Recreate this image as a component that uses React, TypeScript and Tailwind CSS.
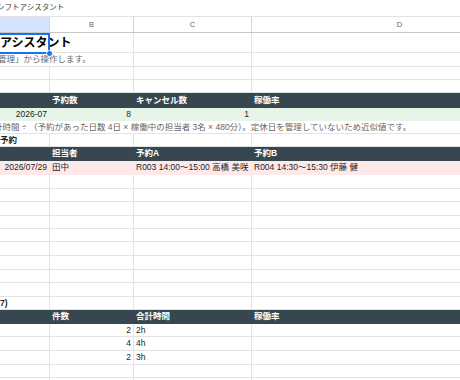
import type { ReactNode } from 'react'

const W = ['w-[50px]', 'w-[84px]', 'w-[118px]', 'w-[296px]']

type TCell = {
    text?: ReactNode
    align?: 'left' | 'right'
    bold?: boolean
    cls?: string
    hideLine?: boolean
}

type TRow = {
    h: string
    tone?: 'plain' | 'dark' | 'green' | 'pink'
    cells: TCell[]
}

const toneCls = {
    plain: 'bg-white border-[#e2e3e3] text-[#1f1f1f]',
    dark: 'bg-[#37474f] border-[#37474f] text-white font-bold',
    green: 'bg-[#e7f4e8] border-[#e7f4e8] text-[#1f1f1f]',
    pink: 'bg-[#fde9e9] border-[#fde9e9] text-[#1f1f1f]',
}

function Row({ row }: { row: TRow }) {
    const tone = row.tone ?? 'plain'
    return (
        <div className={`flex shrink-0 ${row.h}`}>
            {W.map((w, i) => {
                const c = row.cells[i] ?? {}
                return (
                    <div
                        key={i}
                        className={`${w} shrink-0 border-b border-r ${toneCls[tone]} ${c.hideLine ? 'border-r-transparent' : ''} relative flex items-center ${c.align === 'right' ? 'justify-end pr-[2px]' : 'pl-[2px]'} ${c.bold ? 'font-bold' : ''}`}
                    >
                        {c.text !== undefined && (
                            <span className={`whitespace-nowrap leading-none ${c.cls ?? ''}`}>{c.text}</span>
                        )}
                    </div>
                )
            })}
        </div>
    )
}

const empty = (h: string): TRow => ({ h, cells: [] })

const rows: TRow[] = [
    empty('h-[13px]'),
    empty('h-[13px]'),
    {
        h: 'h-[15px]', tone: 'dark', cells: [
            {}, { text: '予約数' }, { text: 'キャンセル数' }, { text: '稼働率' },
        ]
    },
    {
        h: 'h-[13px]', tone: 'green', cells: [
            { text: '2026-07', align: 'right' }, { text: '8', align: 'right' }, { text: '1', align: 'right' }, {},
        ]
    },
    {
        h: 'h-[13px]', cells: [
            {
                text: '計時間 ÷ （予約があった日数 4日 × 稼働中の担当者 3名 × 480分）。定休日を管理していないため近似値です。',
                cls: 'ml-[-8px] text-[#666666] relative z-10',
                hideLine: true,
            },
            { hideLine: true }, { hideLine: true }, {},
        ]
    },
    { h: 'h-[13px]', cells: [{ text: '予約', bold: true, cls: 'ml-[-2px]' }] },
    {
        h: 'h-[14px]', tone: 'dark', cells: [
            {}, { text: '担当者' }, { text: '予約A' }, { text: '予約B' },
        ]
    },
    {
        h: 'h-[14px]', tone: 'pink', cells: [
            { text: '2026/07/29', align: 'right' },
            { text: '田中' },
            { text: 'R003 14:00〜15:00 高橋 美咲' },
            { text: 'R004 14:30〜15:30 伊藤 健' },
        ]
    },
    empty('h-[14px]'),
    empty('h-[13px]'),
    empty('h-[14px]'),
    empty('h-[13px]'),
    empty('h-[13px]'),
    empty('h-[14px]'),
    empty('h-[14px]'),
    empty('h-[13px]'),
    empty('h-[14px]'),
    { h: 'h-[13px]', cells: [{ text: '7)', bold: true, cls: 'ml-[-2px]' }] },
    {
        h: 'h-[14px]', tone: 'dark', cells: [
            {}, { text: '件数' }, { text: '合計時間' }, { text: '稼働率' },
        ]
    },
    { h: 'h-[13px]', cells: [{}, { text: '2', align: 'right' }, { text: '2h' }, {}] },
    { h: 'h-[14px]', cells: [{}, { text: '4', align: 'right' }, { text: '4h' }, {}] },
    { h: 'h-[14px]', cells: [{}, { text: '2', align: 'right' }, { text: '3h' }, {}] },
    empty('h-[13px]'),
    empty('h-[13px]'),
]

export default function App() {
    return (
        <div className="w-[460px] h-[380px] overflow-hidden bg-white font-['Liberation_Sans','Noto_Sans_CJK_JP',sans-serif] text-[8.5px]">
            {/* sheet title bar */}
            <div className="h-[17px] border-b border-[#e3e3e3] flex items-center overflow-hidden">
                <span className="ml-[-3px] text-[7.5px] text-[#3c4043] whitespace-nowrap">シフトアシスタント</span>
            </div>

            {/* column letters */}
            <div className="flex h-[16px] border-b border-[#c7c7c7]">
                {['', 'B', 'C', 'D'].map((l, i) => (
                    <div
                        key={i}
                        className={`${W[i]} shrink-0 border-r border-[#d5d5d5] flex items-center justify-center text-[7.5px] text-[#5f6368] ${i === 0 ? 'bg-[#d3e3fd]' : 'bg-white'}`}
                    >
                        {l}
                    </div>
                ))}
            </div>

            {/* row 1: title */}
            <div className="flex h-[20px] relative">
                <div className="w-[50px] shrink-0 border-b border-[#e2e3e3] flex items-center">
                    <span className="whitespace-nowrap text-[12px] font-bold text-black leading-none relative z-10">アシスタント</span>
                </div>
                <div className="w-[84px] shrink-0 border-b border-r border-[#e2e3e3]" />
                <div className="w-[118px] shrink-0 border-b border-r border-[#e2e3e3]" />
                <div className="w-[296px] shrink-0 border-b border-r border-[#e2e3e3]" />
                {/* selection */}
                <div className="absolute left-[-2px] top-0 w-[52px] h-[21px] border-2 border-[#1a73e8] z-20 pointer-events-none" />
                <div className="absolute left-[46px] top-[17px] w-[7px] h-[7px] rounded-full bg-[#1a73e8] border border-white z-30" />
            </div>

            {/* row 2: subtitle */}
            <div className="flex h-[14px]">
                <div className="w-[50px] shrink-0 border-b border-[#e2e3e3] flex items-center">
                    <span className="whitespace-nowrap ml-[-2px] text-[#666666] leading-none relative z-10">管理」から操作します。</span>
                </div>
                <div className="w-[84px] shrink-0 border-b border-r border-[#e2e3e3]" />
                <div className="w-[118px] shrink-0 border-b border-r border-[#e2e3e3]" />
                <div className="w-[296px] shrink-0 border-b border-r border-[#e2e3e3]" />
            </div>

            {rows.map((r, i) => <Row key={i} row={r} />)}
        </div>
    )
}
